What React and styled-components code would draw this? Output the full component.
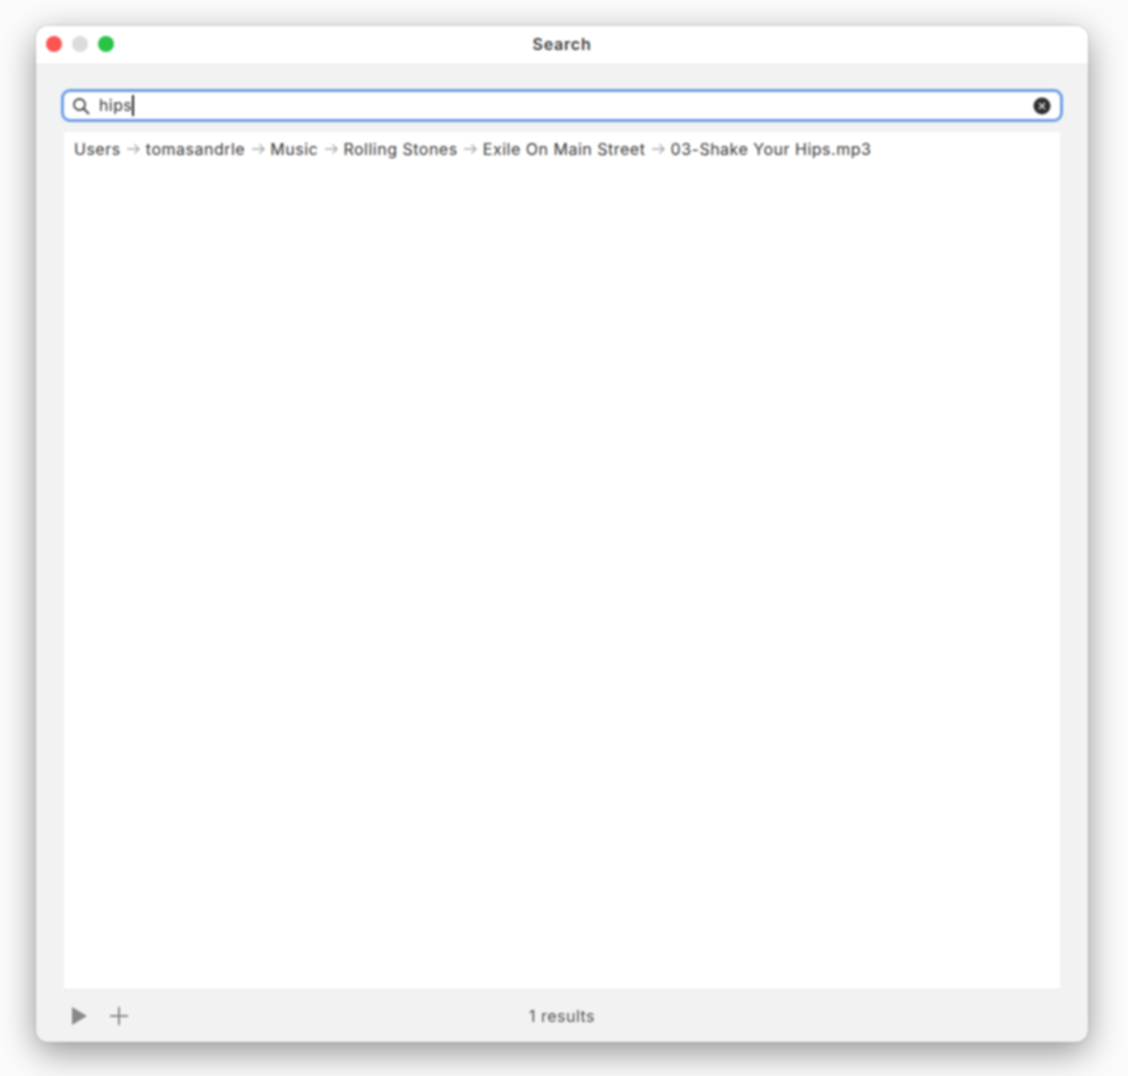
import React from "react";
import styled, { createGlobalStyle } from "styled-components";

const Global = createGlobalStyle`
  html, body {
    margin: 0;
    padding: 0;
    background: #fff;
  }
  body {
    font-family: Inter, "Liberation Sans", sans-serif;
    overflow: hidden;
  }
`;

const Page = styled.div`
  width: 1128px;
  height: 1076px;
  box-sizing: border-box;
  padding: 26px 40px 34px 36px;
  overflow: hidden;
  background: #fbfbfb;
`;

const Win = styled.div`
  height: 100%;
  display: flex;
  flex-direction: column;
  border-radius: 12px;
  background-color: #f1f2f2;
  background-image: repeating-conic-gradient(#eff0f0 0 25%, #f4f4f4 0 50%);
  background-size: 4px 4px;
  box-shadow: 0 0 2px rgba(0, 0, 0, 0.35), 0 10px 34px rgba(0, 0, 0, 0.42);
  overflow: hidden;
  filter: blur(0.8px);
`;

const TitleBar = styled.div`
  position: relative;
  flex: none;
  height: 38px;
  display: flex;
  align-items: center;
  justify-content: center;
  background: #fff;
  border-bottom: 1px solid #e4e4e4;
`;

const Lights = styled.div`
  position: absolute;
  left: 10px;
  top: 10px;
  display: flex;
  gap: 10px;
`;

const Light = styled.span`
  width: 16px;
  height: 16px;
  border-radius: 50%;
  background: ${(p) => p.$color};
`;

const Title = styled.div`
  font-size: 16px;
  font-weight: 600;
  letter-spacing: 0.8px;
  color: #3c3c3c;
  margin-top: -2px;
`;

const Content = styled.div`
  flex: 1;
  display: flex;
  flex-direction: column;
  min-height: 0;
  padding: 24px 25px 0;
`;

const SearchBox = styled.div`
  flex: none;
  height: 33px;
  box-sizing: border-box;
  display: flex;
  align-items: center;
  gap: 9px;
  padding: 0 9px 0 8px;
  background: #fff;
  border: 3px solid #6d9fe6;
  border-radius: 9px;
  font-size: 16px;
  letter-spacing: 0.4px;
  color: #2e2e2e;
`;

const Query = styled.span`
  flex: 1;
  display: flex;
  align-items: center;
  padding-bottom: 1px;
`;

const Caret = styled.span`
  width: 1.5px;
  height: 21px;
  background: #222;
`;

const Results = styled.div`
  flex: 1;
  min-height: 0;
  margin: 10px 3px 0;
  padding: 5px 10px;
  background: #fff;
  border-bottom: 1px solid #e6e6e6;
`;

const Path = styled.div`
  display: flex;
  align-items: center;
  gap: 5.6px;
  height: 23px;
  font-size: 16px;
  letter-spacing: 0.5px;
  color: #383838;
  white-space: nowrap;
`;

const Footer = styled.div`
  position: relative;
  flex: none;
  height: 52px;
  display: flex;
  align-items: center;
  gap: 21px;
  padding: 0 32px 0 36px;
`;

const Count = styled.div`
  position: absolute;
  left: 0;
  right: 0;
  text-align: center;
  font-size: 16px;
  letter-spacing: 0.5px;
  color: #4c4c4c;
`;

const Arrow = () => (
  <svg width="14" height="12" viewBox="0 0 14 12" fill="none" stroke="#aaa" strokeWidth="1.4">
    <path d="M1 6h12M8.5 1.5 13 6l-4.5 4.5" />
  </svg>
);

const parts = ["Users", "tomasandrle", "Music", "Rolling Stones", "Exile On Main Street", "03-Shake Your Hips.mp3"];

export default function App() {
  return (
    <Page>
      <Global />
      <Win>
        <TitleBar>
          <Lights>
            <Light $color="#fb5552" />
            <Light $color="#dcdcdc" />
            <Light $color="#28c445" />
          </Lights>
          <Title>Search</Title>
        </TitleBar>
        <Content>
          <SearchBox>
            <svg width="18" height="18" viewBox="0 0 18 18" fill="none" stroke="#444" strokeWidth="1.8">
              <circle cx="7.5" cy="7.5" r="5.5" />
              <path d="M11.5 11.5 16.5 16.5" strokeLinecap="round" />
            </svg>
            <Query>
              hips
              <Caret />
            </Query>
            <svg width="18" height="18" viewBox="0 0 18 18">
              <circle cx="9" cy="9" r="8.5" fill="#2f2f2f" />
              <path d="M6 6l6 6M12 6l-6 6" stroke="#ddd" strokeWidth="1.6" />
            </svg>
          </SearchBox>
          <Results>
            <Path>
              {parts.map((part, i) => (
                <React.Fragment key={part}>
                  {i > 0 && <Arrow />}
                  <span>{part}</span>
                </React.Fragment>
              ))}
            </Path>
          </Results>
        </Content>
        <Footer>
          <svg width="16" height="18" viewBox="0 0 16 18">
            <path d="M0 0 15 9 0 18z" fill="#8a8a8a" />
          </svg>
          <svg width="20" height="20" viewBox="0 0 20 20" stroke="#8a8a8a" strokeWidth="2">
            <path d="M10 1v18M1 10h18" />
          </svg>
          <Count>1 results</Count>
        </Footer>
      </Win>
    </Page>
  );
}
